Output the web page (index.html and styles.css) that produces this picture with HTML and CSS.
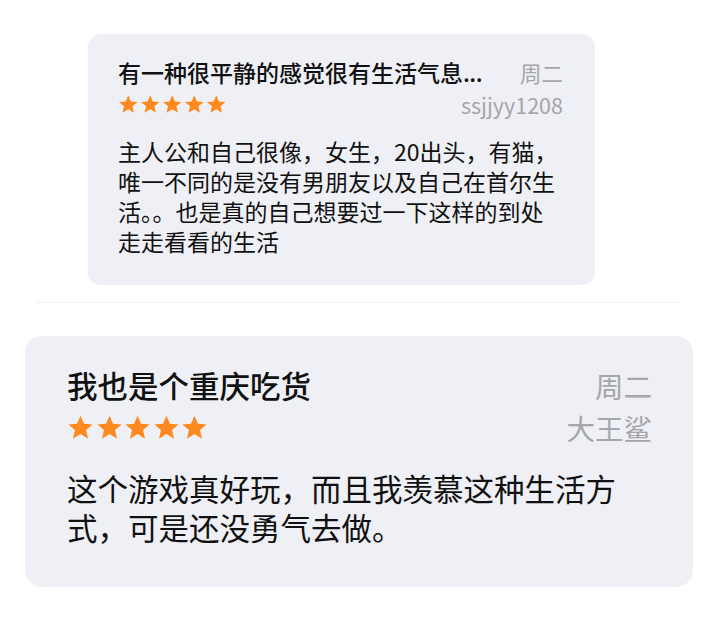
FILE: index.html
```html
<!DOCTYPE html>
<html lang="zh-CN">
<head>
  <meta charset="UTF-8">
  <title>评论</title>
  <link rel="stylesheet" href="styles.css">
</head>
<body>
  <div class="page">
    <!-- 第一条评论 -->
    <div class="card card-small">
      <div class="head">
        <div class="title">有一种很平静的感觉很有生活气息<span class="dots">...</span></div>
        <div class="meta">周二</div>
        <div class="stars">
          <svg viewBox="0 0 24 24"><path d="M12 1.6l3.1 7.1 7.7.6-5.9 5 1.8 7.6L12 17.8l-6.7 4.1 1.8-7.6-5.9-5 7.7-.6z"/></svg>
          <svg viewBox="0 0 24 24"><path d="M12 1.6l3.1 7.1 7.7.6-5.9 5 1.8 7.6L12 17.8l-6.7 4.1 1.8-7.6-5.9-5 7.7-.6z"/></svg>
          <svg viewBox="0 0 24 24"><path d="M12 1.6l3.1 7.1 7.7.6-5.9 5 1.8 7.6L12 17.8l-6.7 4.1 1.8-7.6-5.9-5 7.7-.6z"/></svg>
          <svg viewBox="0 0 24 24"><path d="M12 1.6l3.1 7.1 7.7.6-5.9 5 1.8 7.6L12 17.8l-6.7 4.1 1.8-7.6-5.9-5 7.7-.6z"/></svg>
          <svg viewBox="0 0 24 24"><path d="M12 1.6l3.1 7.1 7.7.6-5.9 5 1.8 7.6L12 17.8l-6.7 4.1 1.8-7.6-5.9-5 7.7-.6z"/></svg>
        </div>
        <div class="meta">ssjjyy1208</div>
      </div>
      <p class="text">主人公和自己很像，女生，20出头，有猫，<br>唯一不同的是没有男朋友以及自己在首尔生<br>活。。也是真的自己想要过一下这样的到处<br>走走看看的生活</p>
    </div>

    <div class="divider"></div>

    <!-- 第二条评论 -->
    <div class="card card-big">
      <div class="head">
        <div class="title">我也是个重庆吃货</div>
        <div class="meta">周二</div>
        <div class="stars">
          <svg viewBox="0 0 24 24"><path d="M12 1.6l3.1 7.1 7.7.6-5.9 5 1.8 7.6L12 17.8l-6.7 4.1 1.8-7.6-5.9-5 7.7-.6z"/></svg>
          <svg viewBox="0 0 24 24"><path d="M12 1.6l3.1 7.1 7.7.6-5.9 5 1.8 7.6L12 17.8l-6.7 4.1 1.8-7.6-5.9-5 7.7-.6z"/></svg>
          <svg viewBox="0 0 24 24"><path d="M12 1.6l3.1 7.1 7.7.6-5.9 5 1.8 7.6L12 17.8l-6.7 4.1 1.8-7.6-5.9-5 7.7-.6z"/></svg>
          <svg viewBox="0 0 24 24"><path d="M12 1.6l3.1 7.1 7.7.6-5.9 5 1.8 7.6L12 17.8l-6.7 4.1 1.8-7.6-5.9-5 7.7-.6z"/></svg>
          <svg viewBox="0 0 24 24"><path d="M12 1.6l3.1 7.1 7.7.6-5.9 5 1.8 7.6L12 17.8l-6.7 4.1 1.8-7.6-5.9-5 7.7-.6z"/></svg>
        </div>
        <div class="meta">大王鲨</div>
      </div>
      <p class="text">这个游戏真好玩，而且我羡慕这种生活方<br>式，可是还没勇气去做。</p>
    </div>
  </div>
</body>
</html>
```

FILE: styles.css
```css
body, html {
  margin: 0;
  padding: 0;
  background: #fff;
  font-family: "Noto Sans CJK SC", "Noto Sans", sans-serif;
  color: #111;
}
.page {
  padding-top: 34px;
}
.card {
  background: #eff0f5;
  box-sizing: border-box;
}
.head {
  display: grid;
  grid-template-columns: minmax(0, 1fr) auto;
  align-items: center;
}
.title {
  font-weight: 500;
  white-space: nowrap;
}
.dots {
  letter-spacing: -0.5px;
}
.meta {
  color: #a5a5aa;
  text-align: right;
}
.stars {
  display: flex;
}
.stars svg {
  fill: #fd8a1e;
  display: block;
}
.text {
  margin: 0;
  white-space: nowrap;
}

/* 小卡片 */
.card-small {
  margin-left: 88px;
  width: 507px;
  border-radius: 13px;
  padding: 22px 32px 29px 30px;
}
.card-small .head {
  grid-auto-rows: 32px;
}
.card-small .title { font-size: 23px; }
.card-small .meta { font-size: 21.5px; }
.card-small .stars { gap: 1.5px; }
.card-small .stars svg { width: 20.5px; height: 20.5px; }
.card-small .text {
  margin-top: 16px;
  font-size: 23px;
  line-height: 30px;
}

.divider {
  height: 1px;
  background: #f0f0f2;
  margin: 17px 37px 33px 37px;
}

/* 大卡片 */
.card-big {
  margin-left: 25px;
  width: 668px;
  border-radius: 17px;
  padding: 28px 41px 40px 42px;
}
.card-big .head {
  grid-auto-rows: 42px;
}
.card-big .title { font-size: 30.5px; }
.card-big .meta { font-size: 28.5px; }
.card-big .stars { gap: 1.5px; }
.card-big .stars svg { width: 27px; height: 27px; }
.card-big .text {
  margin-top: 21px;
  font-size: 30.5px;
  line-height: 39px;
}
```
